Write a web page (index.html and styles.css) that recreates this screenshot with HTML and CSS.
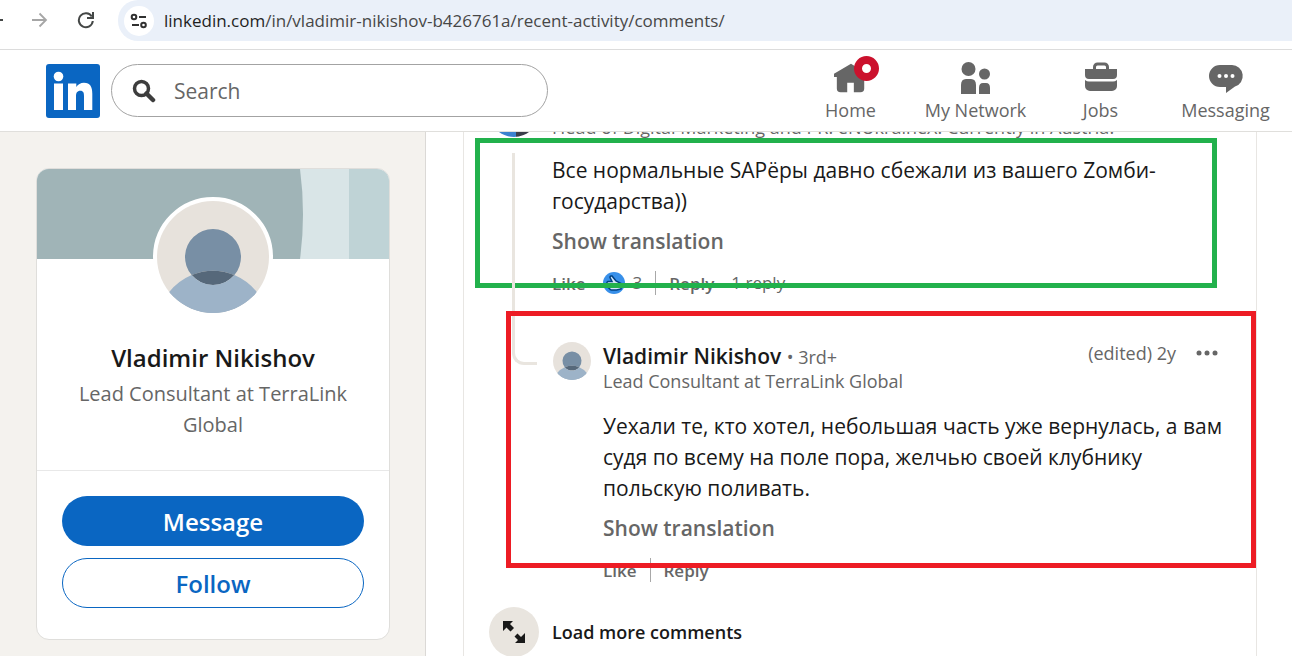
FILE: index.html
```html
<!DOCTYPE html>
<html lang="en">
  <head>
    <meta charset="UTF-8" />
    <meta name="viewport" content="width=device-width, initial-scale=1.0" />
    <title>Vladimir Nikishov | Comments</title>
    <link rel="stylesheet" href="styles.css" />
  </head>
  <body>
    <!-- shared avatar drawing -->
    <svg class="sprite" aria-hidden="true">
      <symbol id="ghost-person" viewBox="0 0 128 128">
        <path fill="#e7e2dc" d="M0 0h128v128H0z" />
        <path d="M88.41 84.67a32 32 0 10-48.82 0 66.13 66.13 0 0148.82 0z" fill="#788fa5" />
        <path d="M88.41 84.67a32 32 0 01-48.82 0 66.13 66.13 0 0148.82 0z" fill="#56687a" />
        <path d="M64 96a31.93 31.93 0 0024.41-11.33 66.26 66.26 0 0125.62 19.33 64 64 0 01-100.06 0 66.26 66.26 0 0125.62-19.33A31.93 31.93 0 0064 96z" fill="#9db3c8" />
        <path d="M14 104h100v24H14z" fill="#9db3c8" />
      </symbol>
    </svg>

    <div class="browser-bar">
      <button class="browser-btn back" aria-label="Back">
        <svg width="16" height="16" viewBox="0 0 16 16"><path d="M16 8H2M8 2L2 8l6 6" fill="none" stroke="#444746" stroke-width="2" /></svg>
      </button>
      <button class="browser-btn" aria-label="Forward" disabled>
        <svg width="16" height="16" viewBox="0 0 16 16"><path d="M0 8h14M7.500 1.500L14 8l-6.500 6.500" fill="none" stroke="#a6a6a6" stroke-width="1.800" /></svg>
      </button>
      <button class="browser-btn" aria-label="Reload">
        <svg width="18" height="18" viewBox="0 0 18 18">
          <path d="M14.800 5.500A7 7 0 1 0 15.800 10" fill="none" stroke="#444746" stroke-width="2" />
          <path d="M16 1v6h-6" fill="none" stroke="#444746" stroke-width="2" />
        </svg>
      </button>
      <div class="address">
        <span class="site-info">
          <svg width="18" height="16" viewBox="0 0 18 16" fill="none" stroke="#303030" stroke-width="2">
            <circle cx="4" cy="4" r="2.300" />
            <path d="M9 4h7M2 12h7" />
            <circle cx="13.500" cy="12" r="2.300" />
          </svg>
        </span>
        <span class="url"><b>linkedin.com</b>/in/vladimir-nikishov-b426761a/recent-activity/comments/</span>
      </div>
    </div>

    <header class="global-nav">
      <a href="#" class="logo" aria-label="LinkedIn">
        <svg width="54" height="54" viewBox="0 0 54 54">
          <rect width="54" height="54" rx="3" fill="#0a66c2" />
          <circle cx="12.500" cy="12.500" r="4.800" fill="#fff" />
          <path d="M8 19.500h9V46H8zM22 19.500h8.300V23c1.500-2.500 4.400-4.200 7.600-4.200 6.600 0 8.400 4.600 8.400 10.900V46h-8.300V32c0-3-.5-5.300-3.700-5.300S30 29 30 32v14h-8z" fill="#fff" />
        </svg>
      </a>
      <label class="search">
        <svg width="24" height="24" viewBox="0 0 24 24" fill="none" stroke="#3d3d3d">
          <circle cx="9.500" cy="9.500" r="7" stroke-width="3.500" />
          <path d="M14.500 14.500l6.500 6.500" stroke-width="4.500" stroke-linecap="round" />
        </svg>
        <input type="text" placeholder="Search" aria-label="Search" />
      </label>
      <nav class="nav-links">
        <a href="#" class="nav-item">
          <span class="nav-icon">
            <svg width="34" height="32" viewBox="0 0 36 32" fill="#666">
              <path d="M18 1L0 11.500V15h3v12a4 4 0 0 0 4 4h7V21h7v10h7a4 4 0 0 0 4-4V15h3v-3.500z" />
            </svg>
            <span class="badge"></span>
          </span>
          Home
        </a>
        <a href="#" class="nav-item">
          <span class="nav-icon">
            <svg width="30" height="32" viewBox="0 0 30 32" fill="#666">
              <circle cx="7.500" cy="7" r="7" />
              <path d="M0 32V23q0-6 5-6h5q5 0 5 6v9zM18 32v-6q0-5 4-5h3q4 0 4 5v6z" />
              <circle cx="23.500" cy="12" r="5.500" />
            </svg>
          </span>
          My Network
        </a>
        <a href="#" class="nav-item">
          <span class="nav-icon">
            <svg width="32" height="32" viewBox="0 0 32 32" fill="#666">
              <path d="M0 7h32v6a4 4 0 0 1-4 4H4a4 4 0 0 1-4-4zM0 18q2 1.500 4 1.500h24q2 0 4-1.500v6a5 5 0 0 1-5 5H5a5 5 0 0 1-5-5z" />
              <path d="M9.500 7.500V5a3 3 0 0 1 3-3h7a3 3 0 0 1 3 3v2.500" fill="none" stroke="#666" stroke-width="3" />
            </svg>
          </span>
          Jobs
        </a>
        <a href="#" class="nav-item">
          <span class="nav-icon">
            <svg width="36" height="32" viewBox="0 0 36 32">
              <path d="M12 3h12a11 11 0 0 1 3 21.500L18 31v-6h-6a11 11 0 0 1 0-22z" fill="#666" />
              <g fill="#fff"><circle cx="11.500" cy="14" r="2" /><circle cx="18" cy="14" r="2" /><circle cx="24.500" cy="14" r="2" /></g>
            </svg>
          </span>
          Messaging
        </a>
      </nav>
    </header>

    <main class="layout">
      <aside class="sidebar">
        <section class="profile-card">
          <svg class="cover" viewBox="0 0 352 90" preserveAspectRatio="none">
            <rect width="352" height="90" fill="#bfd3d6" />
            <rect width="312" height="90" fill="#d9e5e7" />
            <path d="M0 0h263q6 45 0 90H0z" fill="#a0b4b7" />
          </svg>
          <svg class="avatar-large"><use href="#ghost-person" /></svg>
          <h1 class="profile-name">Vladimir Nikishov</h1>
          <p class="profile-headline">Lead Consultant at TerraLink Global</p>
          <div class="profile-actions">
            <button class="btn btn-primary">Message</button>
            <button class="btn btn-outline">Follow</button>
          </div>
        </section>
      </aside>

      <section class="feed">
        <article class="comment">
          <div class="comment-head">
            <span class="avatar-photo"></span>
            <p class="headline">Head of Digital Marketing and PR. eNUkraineX. Currently in Austria.</p>
          </div>
          <div class="comment-body">
            <p class="comment-text">Все нормальные SAPёры давно сбежали из вашего Zомби-государства))</p>
            <button class="link-btn translate">Show translation</button>
            <div class="actions">
              <button class="link-btn">Like</button>
              <span class="reactions">
                <svg width="22" height="22" viewBox="0 0 22 22">
                  <circle cx="11" cy="11" r="11" fill="#378fe9" />
                  <path d="M18 11.500l-5-2.500-4-5q-2-.5-2 1.500l2 4H5q-2 1-.5 2.500-1 1.500.5 2.500 0 1.500 1.500 2 .5 1.500 2 1.500h5l4.500-1z" fill="#d4e7fa" stroke="#004182" stroke-width="1.500" />
                </svg>
                3
              </span>
              <span class="divider"></span>
              <button class="link-btn">Reply</button>
              <span class="reply-count">1 reply</span>
            </div>
          </div>
          <span class="mark mark-green"></span>
          <span class="thread-line"></span>
        </article>

        <article class="comment reply">
          <div class="reply-head">
            <svg class="avatar-small"><use href="#ghost-person" /></svg>
            <div class="author">
              <h2 class="author-name">Vladimir Nikishov <small>• 3rd+</small></h2>
              <p class="headline">Lead Consultant at TerraLink Global</p>
            </div>
            <span class="time">(edited) 2y</span>
            <button class="more" aria-label="More options">
              <svg width="22" height="6" viewBox="0 0 22 6" fill="#666"><circle cx="3" cy="3" r="2.500" /><circle cx="11" cy="3" r="2.500" /><circle cx="19" cy="3" r="2.500" /></svg>
            </button>
          </div>
          <div class="comment-body">
            <p class="comment-text">Уехали те, кто хотел, небольшая часть уже вернулась, а вам судя по всему на поле пора, желчью своей клубнику польскую поливать.</p>
            <button class="link-btn translate">Show translation</button>
            <div class="actions">
              <button class="link-btn">Like</button>
              <span class="divider"></span>
              <button class="link-btn">Reply</button>
            </div>
          </div>
          <span class="mark mark-red"></span>
        </article>

        <button class="load-more">
          <span class="load-icon">
            <svg width="24" height="24" viewBox="0 0 24 24" fill="#191919">
              <path d="M1 1h10L8 4l4 4-3.500 3.500-4-4L1 11zM23 23H13l3-3-3.500-3.500 3-3L19 17l4-4z" />
            </svg>
          </span>
          Load more comments
        </button>
      </section>
    </main>
  </body>
</html>
```
FILE: styles.css
```css
* {
  box-sizing: border-box;
}
body {
  margin: 0;
  height: 100vh;
  overflow: hidden;
  display: flex;
  flex-direction: column;
  font-family: "Open Sans", "Noto Sans", sans-serif;
  color: #191919;
  background: #fff;
}
h1,
h2,
p {
  margin: 0;
}
a {
  text-decoration: none;
}
button {
  font-family: inherit;
  border: 0;
  padding: 0;
  background: none;
  cursor: pointer;
}
.sprite {
  position: absolute;
  width: 0;
  height: 0;
}

/* browser toolbar */
.browser-bar {
  flex: none;
  height: 50px;
  display: flex;
  align-items: flex-start;
  border-bottom: 1px solid #dcdcdc;
  overflow: hidden;
}
.browser-btn {
  width: 46px;
  height: 40px;
  display: flex;
  align-items: center;
  justify-content: center;
}
.browser-btn.back {
  width: 17px;
  justify-content: flex-end;
  margin-left: -14px;
  margin-right: 14px;
}
.address {
  flex: 1;
  height: 41px;
  margin-left: 9px;
  padding-left: 6px;
  display: flex;
  align-items: center;
  background: #eaf0f9;
  border-radius: 20px 0 0 20px;
}
.site-info {
  width: 30px;
  height: 30px;
  border-radius: 50%;
  background: #fff;
  display: flex;
  align-items: center;
  justify-content: center;
}
.url {
  margin-left: 10px;
  font-size: 17px;
  color: #474747;
}
.url b {
  font-weight: 400;
  color: #1f1f1f;
}

/* site header */
.global-nav {
  flex: none;
  height: 82px;
  display: flex;
  align-items: center;
  padding: 0 4px 0 46px;
  background: #fff;
  border-bottom: 1px solid #e0dfdc;
}
.logo,
.logo svg {
  display: block;
}
.search {
  width: 437px;
  height: 53px;
  margin-left: 11px;
  padding-left: 20px;
  display: flex;
  align-items: center;
  gap: 16px;
  border: 1px solid #a3a3a3;
  border-radius: 27px;
}
.search input {
  flex: 1;
  border: 0;
  outline: 0;
  background: none;
  font: 21px "Open Sans", "Noto Sans", sans-serif;
}
.search input::placeholder {
  color: #666;
}
.nav-links {
  margin-left: auto;
  padding-top: 2px;
  display: flex;
}
.nav-item {
  width: 125px;
  display: flex;
  flex-direction: column;
  align-items: center;
  gap: 4px;
  font-size: 18px;
  line-height: 24px;
  color: #666;
}
.nav-icon {
  position: relative;
  height: 32px;
}
.badge {
  position: absolute;
  top: -6px;
  right: -11px;
  width: 25px;
  height: 25px;
  border: 8px solid #cb112d;
  border-radius: 50%;
  background: #fff;
}

/* page columns */
.layout {
  flex: 1;
  min-height: 0;
  display: flex;
  overflow: hidden;
}
.sidebar {
  flex: none;
  width: 426px;
  padding: 36px 35px 0 36px;
  background: #f4f2ee;
  border-right: 1px solid #dbd9d6;
}
.profile-card {
  display: flex;
  flex-direction: column;
  align-items: center;
  background: #fff;
  border: 1px solid #dfdedb;
  border-radius: 13px;
  overflow: hidden;
  text-align: center;
}
.cover {
  width: 100%;
  height: 90px;
}
.avatar-large {
  width: 120px;
  height: 120px;
  margin-top: -62px;
  border: 4px solid #fff;
  border-radius: 50%;
  background: #fff;
}
.profile-name {
  margin-top: 24px;
  font-size: 24px;
  font-weight: 600;
  line-height: 34px;
}
.profile-headline {
  padding: 3px 30px 30px;
  font-size: 20px;
  line-height: 31px;
  color: #666;
}
.profile-actions {
  align-self: stretch;
  display: flex;
  flex-direction: column;
  gap: 12px;
  padding: 25px 25px 31px;
  border-top: 1px solid #e8e8e8;
}
.btn {
  height: 50px;
  border-radius: 25px;
  font-size: 24px;
  font-weight: 600;
}
.btn-primary {
  background: #0a66c2;
  color: #fff;
}
.btn-outline {
  border: 1px solid #0a66c2;
  color: #0a66c2;
}

/* comments, scrolled up under the header */
.feed {
  flex: 1;
  margin: -45px 35px 0 37px;
  padding-left: 25px;
  border: solid #e8e6e3;
  border-width: 0 1px;
}
.comment {
  position: relative;
}
.comment-head {
  display: flex;
  align-items: flex-end;
  gap: 13px;
}
.avatar-photo {
  width: 50px;
  height: 50px;
  border-radius: 50%;
  background: linear-gradient(90deg, #3b82cf 55%, #3a3d4a 55%);
}
.headline {
  font-size: 18px;
  line-height: 20px;
  color: #666;
}
.comment-body {
  padding: 18px 40px 0 63px;
}
.comment-text {
  font-size: 21px;
  line-height: 31px;
}
.link-btn {
  font-size: 17px;
  font-weight: 600;
  color: #666;
}
.translate {
  display: block;
  margin-top: 10px;
  font-size: 21px;
  line-height: 28px;
}
.actions {
  display: flex;
  align-items: center;
  gap: 13px;
  margin-top: 16px;
  font-size: 17px;
  line-height: 24px;
  color: #666;
}
.reactions {
  display: flex;
  align-items: center;
  gap: 8px;
  margin-left: 4px;
}
.reply-count {
  margin-left: 4px;
}
.divider {
  width: 1px;
  height: 24px;
  background: #a8a8a8;
}
.thread-line {
  position: absolute;
  top: 66px;
  left: 23px;
  width: 25px;
  height: 212px;
  border: solid #e9e5df;
  border-width: 0 0 3px 3px;
  border-bottom-left-radius: 12px;
}
.reply {
  margin: 47px 0 0 64px;
}
.reply .comment-body {
  padding: 20px 24px 0 50px;
}
.reply-head {
  display: flex;
  align-items: flex-start;
  padding-right: 38px;
}
.avatar-small {
  width: 38px;
  height: 38px;
  border-radius: 50%;
}
.author {
  flex: 1;
  margin-left: 12px;
}
.author-name {
  font-size: 21px;
  font-weight: 600;
  line-height: 28px;
}
.author-name small {
  font-size: 18px;
  font-weight: 400;
  color: #666;
}
.time {
  font-size: 18px;
  line-height: 22px;
  color: #666;
}
.more {
  display: flex;
  align-items: center;
  margin-left: 20px;
  height: 22px;
}

/* highlight frames drawn over the comments */
.mark {
  position: absolute;
  border: 5px solid #22b14c;
  pointer-events: none;
}
.mark-green {
  top: 51px;
  right: 39px;
  left: -14px;
  height: 150px;
}
.mark-red {
  top: -31px;
  right: 0;
  left: -47px;
  height: 257px;
  border-color: #ed1c24;
}
.load-more {
  display: flex;
  align-items: center;
  gap: 13px;
  margin-top: 25px;
  font-size: 18px;
  font-weight: 600;
  color: #191919;
}
.load-icon {
  width: 50px;
  height: 50px;
  border-radius: 50%;
  background: #e9e5df;
  display: flex;
  align-items: center;
  justify-content: center;
}
```
